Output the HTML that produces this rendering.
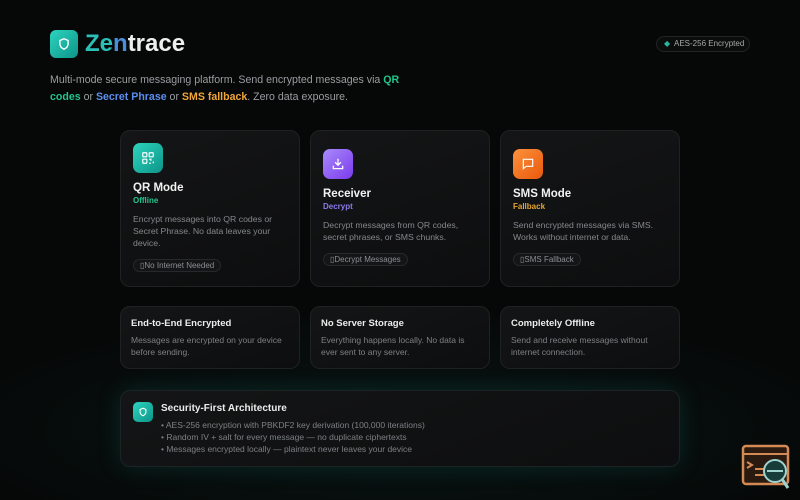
<!DOCTYPE html>
<html><head><meta charset="utf-8"><style>
*{margin:0;padding:0;box-sizing:border-box}
html,body{width:800px;height:500px;overflow:hidden;background:#060707}
body{font-family:"Liberation Sans",sans-serif;position:relative;color:#eee}
.abs{position:absolute}
.card{position:absolute;background:linear-gradient(160deg,#141516,#0d0e0f);border:1px solid #1f2123;border-radius:10px}
.ico{position:absolute;width:30px;height:30px;border-radius:7px;display:flex;align-items:center;justify-content:center}
.t{position:absolute;font-size:11.5px;font-weight:bold;color:#f2f2f2}
.s{position:absolute;font-size:8px;font-weight:bold}
.d{position:absolute;font-size:8.7px;line-height:12px;color:#85888b;width:148px}
.b{position:absolute;font-size:8px;color:#8c8f92;border:1px solid #26282a;background:#141517;border-radius:8px;padding:1px 6px;height:13px;line-height:10px}
.ft{position:absolute;font-size:9.5px;font-weight:bold;color:#ececec}
.fd{position:absolute;font-size:8.5px;line-height:12px;color:#7d8083;width:155px}
</style></head><body>
<div class="abs" style="left:0;top:300px;width:800px;height:200px;background:radial-gradient(ellipse 500px 130px at 50% 65%,rgba(20,120,110,0.12),rgba(0,0,0,0))"></div>
<div class="abs" style="left:50px;top:30px;width:28px;height:28px;border-radius:6px;background:linear-gradient(135deg,#2dd4bf,#0d9488);display:flex;align-items:center;justify-content:center">
<svg width="14" height="14" viewBox="0 0 24 24" fill="none" stroke="#fff" stroke-width="2.4"><path d="M12 3l7 3v6c0 4-3 7-7 9-4-2-7-5-7-9V6z"/></svg></div>
<div class="abs" style="left:85px;top:29px;font-size:24px;font-weight:bold;line-height:30px"><span style="color:#2bbfb8">Ze</span><span style="color:#4a8fdc">n</span><span style="color:#eee">trace</span></div>
<div class="abs" style="left:656px;top:36px;width:94px;height:16px;border:1px solid #1f2523;border-radius:8px;background:#0b0d0c;font-size:8px;color:#a5a8aa;line-height:14px;padding-left:17px">AES-256 Encrypted<span style="position:absolute;left:7px;top:0;color:#2bb39f;font-size:8px">◆</span></div>
<div class="abs" style="left:50px;top:72px;width:362px;font-size:10.6px;line-height:17px;color:#9a9da0">Multi-mode secure messaging platform. Send encrypted messages via <b style="color:#22c58b">QR codes</b> or <b style="color:#5b8def">Secret Phrase</b> or <b style="color:#f0a63a">SMS fallback</b>. Zero data exposure.</div>

<div class="card" style="left:120px;top:130px;width:180px;height:157px"></div>
<div class="card" style="left:310px;top:130px;width:180px;height:157px"></div>
<div class="card" style="left:500px;top:130px;width:180px;height:157px"></div>

<div class="ico" style="left:133px;top:143px;background:linear-gradient(135deg,#2dd4bf,#0d9488)"><svg width="14" height="14" viewBox="0 0 24 24" fill="none" stroke="#fff" stroke-width="2"><rect x="3" y="3" width="7" height="7" rx="1"/><rect x="14" y="3" width="7" height="7" rx="1"/><rect x="3" y="14" width="7" height="7" rx="1"/><path d="M14 14h3v3M21 14v0M14 21h3M21 18v3"/></svg></div>
<div class="t" style="left:133px;top:182px">QR Mode</div>
<div class="s" style="left:133px;top:196px;color:#22c58b">Offline</div>
<div class="d" style="left:133px;top:213px">Encrypt messages into QR codes or Secret Phrase. No data leaves your device.</div>
<div class="b" style="left:133px;top:259px">▯No Internet Needed</div>

<div class="ico" style="left:323px;top:149px;background:linear-gradient(135deg,#a78bfa,#7c3aed)"><svg width="14" height="14" viewBox="0 0 24 24" fill="none" stroke="#fff" stroke-width="2.2"><path d="M12 3v11M7 9l5 5 5-5M4 15v5h16v-5"/></svg></div>
<div class="t" style="left:323px;top:188px">Receiver</div>
<div class="s" style="left:323px;top:202px;color:#8b7ae8">Decrypt</div>
<div class="d" style="left:323px;top:219px">Decrypt messages from QR codes, secret phrases, or SMS chunks.</div>
<div class="b" style="left:323px;top:253px">▯Decrypt Messages</div>

<div class="ico" style="left:513px;top:149px;background:linear-gradient(135deg,#fb923c,#ea580c)"><svg width="14" height="14" viewBox="0 0 24 24" fill="none" stroke="#fff" stroke-width="2"><path d="M4 4h16v12H9l-5 4z"/></svg></div>
<div class="t" style="left:513px;top:188px">SMS Mode</div>
<div class="s" style="left:513px;top:202px;color:#e8a531">Fallback</div>
<div class="d" style="left:513px;top:219px">Send encrypted messages via SMS. Works without internet or data.</div>
<div class="b" style="left:513px;top:253px">▯SMS Fallback</div>

<div class="card" style="left:120px;top:306px;width:180px;height:63px"></div>
<div class="card" style="left:310px;top:306px;width:180px;height:63px"></div>
<div class="card" style="left:500px;top:306px;width:180px;height:63px"></div>
<div class="ft" style="left:131px;top:318px">End-to-End Encrypted</div>
<div class="fd" style="left:131px;top:334px">Messages are encrypted on your device before sending.</div>
<div class="ft" style="left:321px;top:318px">No Server Storage</div>
<div class="fd" style="left:321px;top:334px">Everything happens locally. No data is ever sent to any server.</div>
<div class="ft" style="left:511px;top:318px">Completely Offline</div>
<div class="fd" style="left:511px;top:334px">Send and receive messages without internet connection.</div>

<div class="card" style="left:120px;top:390px;width:560px;height:77px;box-shadow:0 0 24px rgba(30,160,140,0.18);border-color:#1b2422"></div>
<div class="ico" style="left:133px;top:402px;width:20px;height:20px;border-radius:5px;background:linear-gradient(135deg,#2dd4bf,#0d9488)"><svg width="10" height="10" viewBox="0 0 24 24" fill="none" stroke="#fff" stroke-width="2.6"><path d="M12 3l7 3v6c0 4-3 7-7 9-4-2-7-5-7-9V6z"/></svg></div>
<div class="ft" style="left:161px;top:403px;font-size:10px">Security-First Architecture</div>
<div class="fd" style="left:161px;top:419px;width:400px">• AES-256 encryption with PBKDF2 key derivation (100,000 iterations)<br>• Random IV + salt for every message — no duplicate ciphertexts<br>• Messages encrypted locally — plaintext never leaves your device</div>

<svg class="abs" style="left:741px;top:444px" width="50" height="46" viewBox="0 0 50 46"><rect x="2" y="2" width="45" height="38" rx="3" fill="#2a1a10" stroke="#d48a55" stroke-width="2.5"/><line x1="2" y1="10" x2="47" y2="10" stroke="#d48a55" stroke-width="2"/><path d="M6 18l5 3-5 3M14 25h12M14 31h12" stroke="#d48a55" stroke-width="2" fill="none"/><circle cx="34" cy="27" r="11" fill="#183c3a" stroke="#9fd3cf" stroke-width="2"/><line x1="26" y1="27" x2="42" y2="27" stroke="#9fd3cf" stroke-width="2"/><line x1="41" y1="35" x2="47" y2="44" stroke="#9fd3cf" stroke-width="3"/></svg>
</body></html>
